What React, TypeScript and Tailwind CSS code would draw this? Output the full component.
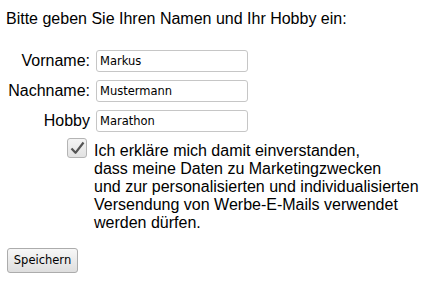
import { useState } from "react";

const labelCls =
  "w-[84px] shrink-0 text-right text-[16px] leading-[22px] text-black";
const inputCls =
  "h-[22px] w-[152px] rounded-[3px] border border-[#c6c6c6] bg-white pl-[3px] text-[11.5px] text-black outline-none";

function Field({
  label,
  value,
  onChange,
}: {
  label: string;
  value: string;
  onChange: (v: string) => void;
}) {
  return (
    <div className="flex items-center gap-[6px]">
      <label className={labelCls}>{label}</label>
      <input
        className={inputCls}
        style={{ fontFamily: '"DejaVu Sans", Verdana, sans-serif' }}
        value={value}
        onChange={(e) => onChange(e.target.value)}
      />
    </div>
  );
}

export default function App() {
  const [vorname, setVorname] = useState("Markus");
  const [nachname, setNachname] = useState("Mustermann");
  const [hobby, setHobby] = useState("Marathon");
  const [agree, setAgree] = useState(true);

  return (
    <div
      className="h-[281px] w-[426px] bg-white pl-[6px] pt-[10px] text-black"
      style={{ fontFamily: '"Liberation Sans", Arial, sans-serif' }}
    >
      <p className="text-[16px] leading-[18px]">
        Bitte geben Sie Ihren Namen und Ihr Hobby ein:
      </p>

      <div className="mt-[22px] flex flex-col gap-[8px]">
        <Field label="Vorname:" value={vorname} onChange={setVorname} />
        <Field label="Nachname:" value={nachname} onChange={setNachname} />
        <Field label="Hobby" value={hobby} onChange={setHobby} />
      </div>

      <div className="mt-[6px] flex items-start gap-[7px] pl-[61px]">
        <button
          type="button"
          onClick={() => setAgree(!agree)}
          className="flex h-[20px] w-[20px] shrink-0 items-center justify-center rounded-[3px] border border-[#b4b4b4] bg-gradient-to-b from-[#f4f4f4] to-[#e2e2e2]"
        >
          {agree && (
            <svg width="15" height="14" viewBox="0 0 15 14">
              <path
                d="M1.5 7.5 L5.5 11.8 L13.5 1.5"
                fill="none"
                stroke="#555555"
                strokeWidth="2.2"
                strokeLinejoin="round"
              />
            </svg>
          )}
        </button>
        <p className="mt-[4px] text-[16px] leading-[18px]">
          Ich erkläre mich damit einverstanden,
          <br />
          dass meine Daten zu Marketingzwecken
          <br />
          und zur personalisierten und individualisierten
          <br />
          Versendung von Werbe-E-Mails verwendet
          <br />
          werden dürfen.
        </p>
      </div>

      <button
        type="button"
        className="ml-[1px] mt-[16px] h-[25px] w-[71px] rounded-[3px] border border-[#acacac] bg-gradient-to-b from-[#f7f7f7] to-[#dedede] text-[11.5px] text-black"
        style={{ fontFamily: '"DejaVu Sans", Verdana, sans-serif' }}
      >
        Speichern
      </button>
    </div>
  );
}
